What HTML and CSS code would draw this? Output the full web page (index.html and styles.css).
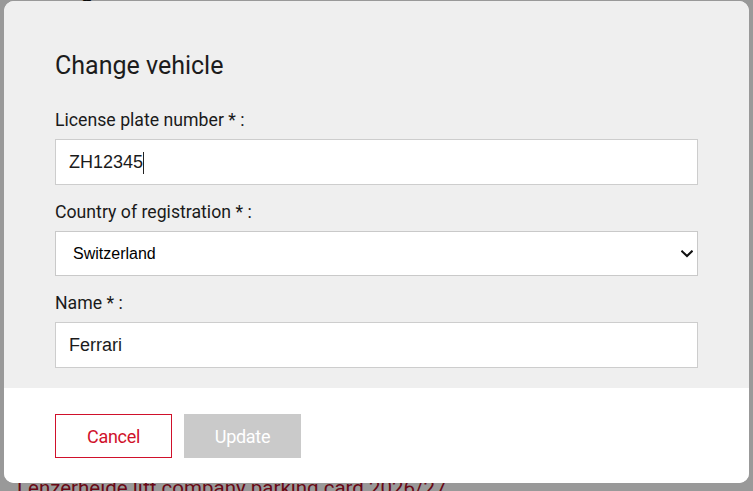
FILE: index.html
```html
<!DOCTYPE html>
<html lang="en">
<head>
<meta charset="utf-8">
<title>Change vehicle</title>
<link rel="stylesheet" href="styles.css">
</head>
<body>
<div class="page">
  <div class="top-row">
    <span class="status-dot"></span>
    <span class="top-text">Freigeschaltet für sämtliche Parkkarten 2026 – Winter 2027</span>
  </div>
  <div class="page-body"></div>
  <h2 class="page-heading">Lenzerheide lift company parking card 2026/27</h2>
</div>

<div class="overlay"></div>

<div class="modal" role="dialog" aria-labelledby="modal-title">
  <form class="modal-body">
    <h1 class="modal-title" id="modal-title">Change vehicle</h1>

    <div class="field">
      <label class="field-label" for="plate">License plate number * :</label>
      <div class="control">
        <input class="text-input" id="plate" type="text" value="ZH12345">
        <span class="caret"></span>
      </div>
    </div>

    <div class="field">
      <label class="field-label" for="country">Country of registration * :</label>
      <div class="control">
        <select class="select-input" id="country">
          <option selected>Switzerland</option>
          <option>Germany</option>
          <option>Austria</option>
          <option>France</option>
          <option>Italy</option>
        </select>
        <svg class="chevron" width="12" height="8" viewBox="0 0 12 8" aria-hidden="true">
          <polyline points="1.2,1.4 6,6 10.8,1.4" fill="none" stroke="#111" stroke-width="2.1" stroke-linecap="square"/>
        </svg>
      </div>
    </div>

    <div class="field">
      <label class="field-label" for="name">Name * :</label>
      <div class="control">
        <input class="text-input" id="name" type="text" value="Ferrari">
      </div>
    </div>
  </form>

  <div class="modal-footer">
    <button class="btn btn-cancel" type="button">Cancel</button>
    <button class="btn btn-update" type="button" disabled>Update</button>
  </div>
</div>
</body>
</html>
```

FILE: styles.css
```css
* {
  box-sizing: border-box;
}

html, body {
  margin: 0;
  padding: 0;
  height: 100%;
  overflow: hidden;
}

body {
  background: #ffffff;
  font-family: Roboto, "Liberation Sans", sans-serif;
  color: #1a1a1a;
}

/* ---------- page behind the dialog ---------- */
.page {
  padding: 0 12px 0 15px;
  display: flex;
  flex-direction: column;
}

.top-row {
  margin-top: -19px;
  height: 20px;
  display: flex;
  align-items: flex-end;
  gap: 15px;
}

.status-dot {
  width: 16px;
  height: 16px;
  border-radius: 50%;
  background: #5fd062;
  flex: none;
  margin-bottom: 2px;
}

.top-text {
  font-size: 21px;
  line-height: 20px;
  color: #111;
  font-weight: 500;
  white-space: nowrap;
}

.page-body {
  height: 472px;
}

.page-heading {
  margin: 0;
  padding-left: 2px;
  font-family: Roboto, "Liberation Sans", sans-serif;
  font-weight: 400;
  font-size: 20.5px;
  line-height: 30px;
  color: #b00f27;
  white-space: nowrap;
}

.overlay {
  position: fixed;
  inset: 0;
  background: rgba(0, 0, 0, 0.4);
}

/* ---------- dialog ---------- */
.modal {
  position: fixed;
  left: 4px;
  top: 1px;
  width: 745px;
  height: 482px;
  border-radius: 10px;
  overflow: hidden;
  background: #ffffff;
  display: flex;
  flex-direction: column;
}

.modal-body {
  margin: 0;
  background: #efefef;
  padding: 50px 51px 20px 51px;
  display: flex;
  flex-direction: column;
  gap: 16px;
}

.modal-title {
  margin: 0 0 12px 0;
  font-family: Roboto, "Liberation Sans", sans-serif;
  font-weight: 400;
  font-size: 25px;
  line-height: 30px;
  color: #1c1c1c;
}

.field {
  display: flex;
  flex-direction: column;
  gap: 8px;
}

.field-label {
  font-family: Roboto, "Liberation Sans", sans-serif;
  font-weight: 400;
  font-size: 17.7px;
  line-height: 22px;
  color: #1a1a1a;
}

.control {
  position: relative;
}

.text-input {
  display: block;
  width: 100%;
  height: 46px;
  margin: 0;
  padding: 0 12px 0 13px;
  border: 1px solid #cdcdcd;
  border-radius: 0;
  background: #ffffff;
  font-family: "Liberation Sans", Arial, sans-serif;
  font-size: 18px;
  color: #1b1b1b;
  outline: none;
}

.caret {
  position: absolute;
  left: 88px;
  top: 13px;
  width: 1px;
  height: 22px;
  background: #222;
}

.select-input {
  display: block;
  width: 100%;
  height: 45px;
  margin: 0;
  padding: 0 30px 0 17px;
  border: 1px solid #c9c9c9;
  border-radius: 0;
  background: #ffffff;
  font-family: "Liberation Sans", Arial, sans-serif;
  font-size: 16px;
  color: #000;
  -webkit-appearance: none;
  appearance: none;
  outline: none;
}

.chevron {
  position: absolute;
  right: 5px;
  top: 19px;
  pointer-events: none;
}

/* ---------- footer ---------- */
.modal-footer {
  flex: 1;
  background: #ffffff;
  padding: 26px 51px 0 51px;
  display: flex;
  align-items: flex-start;
  gap: 12px;
}

.btn {
  width: 117px;
  height: 44px;
  margin: 0;
  padding: 0;
  border-radius: 0;
  font-family: Roboto, "Liberation Sans", sans-serif;
  font-size: 18px;
  font-weight: 400;
  letter-spacing: -0.3px;
  cursor: pointer;
}

.btn-cancel {
  background: #ffffff;
  border: 1px solid #d0112b;
  color: #d0112b;
}

.btn-update {
  background: #cacaca;
  border: 1px solid #cacaca;
  color: #ffffff;
}
```
